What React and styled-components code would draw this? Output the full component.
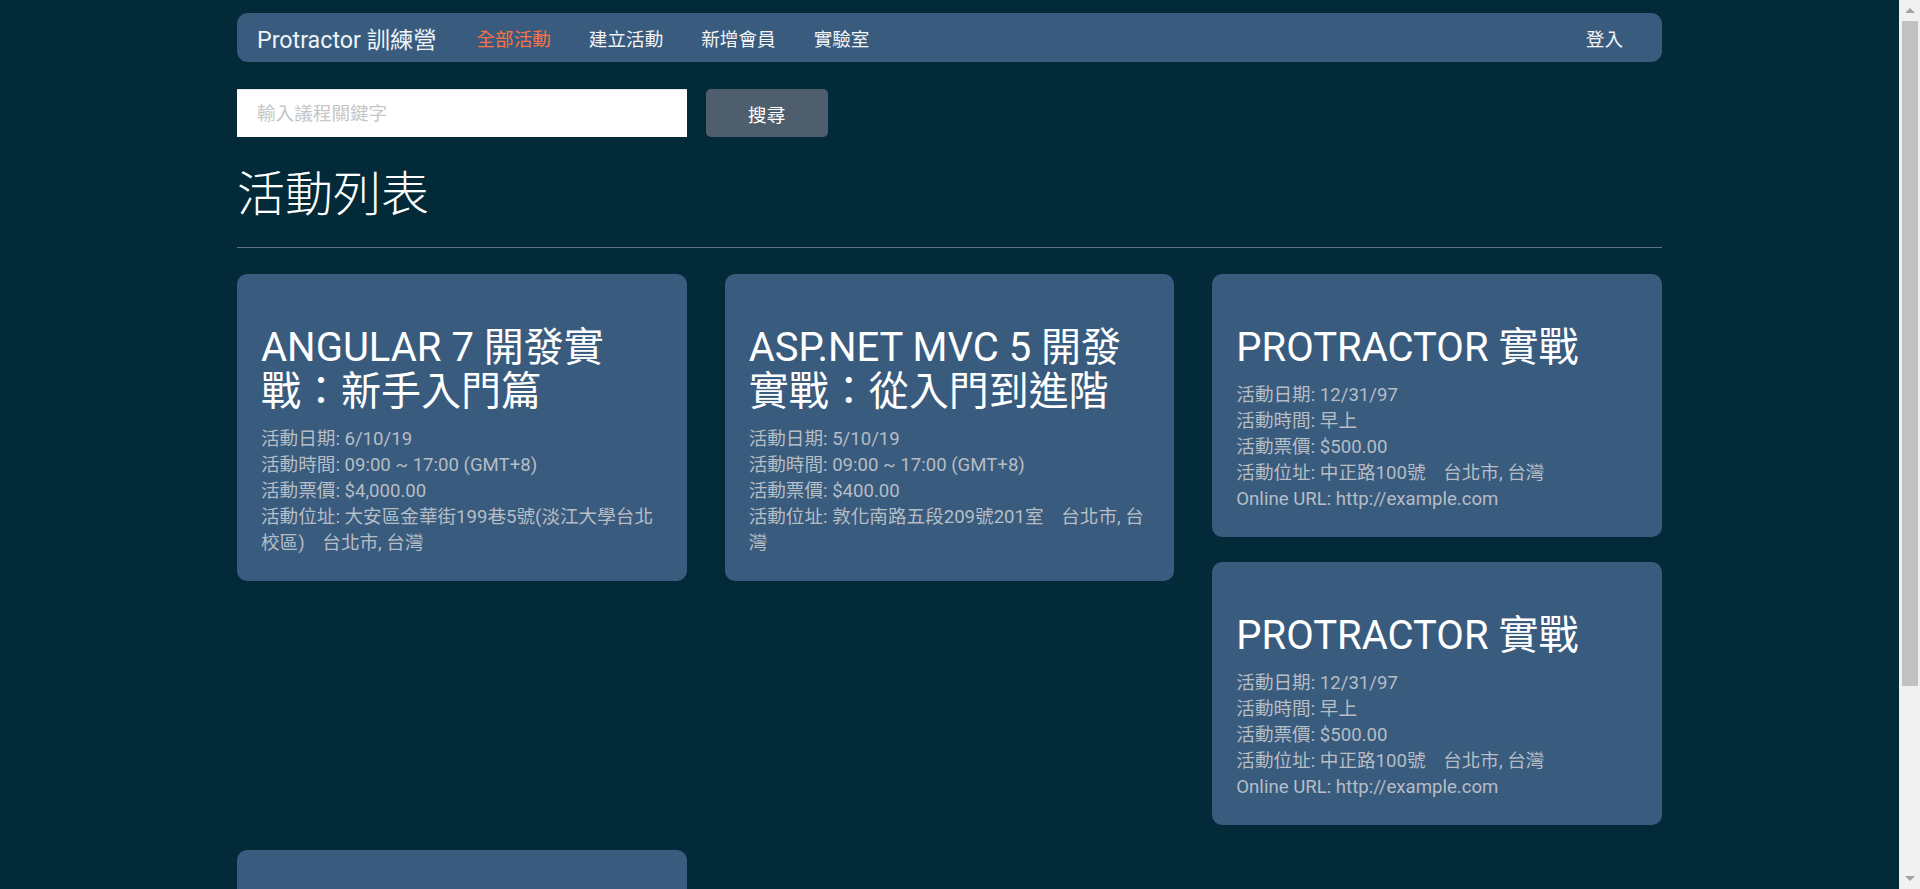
import React from 'react';
import styled, { createGlobalStyle } from 'styled-components';

const GlobalStyle = createGlobalStyle`
  html, body {
    margin: 0;
    padding: 0;
    height: 100%;
    overflow: hidden;
    background: #022a39;
  }
  body {
    font-family: Roboto, "Noto Sans CJK TC", sans-serif;
    font-size: 18.6px;
    color: #ffffff;
  }
  * { box-sizing: border-box; }
`;

const Screen = styled.div`
  display: flex;
  height: 100vh;
`;

const Main = styled.main`
  flex: 1;
  min-width: 0;
  overflow-y: auto;
  background: #022a39;
`;

const ScrollTrack = styled.div`
  flex: 0 0 21px;
  display: flex;
  flex-direction: column;
  background: #f1f1f1;
`;

const ScrollArrow = styled.div`
  flex: 0 0 21px;
  display: flex;
  align-items: center;
  justify-content: center;
  padding-left: 1px;

  &::before {
    content: '';
    width: 0;
    height: 0;
    border-left: 5px solid transparent;
    border-right: 5px solid transparent;
    ${(p) =>
      p.$down
        ? 'border-top: 5px solid #a3a3a3;'
        : 'border-bottom: 5px solid #a3a3a3;'}
  }
`;

const ScrollThumb = styled.div`
  flex: 0 0 665px;
  margin: 0 2px 0 3px;
  background: #c1c1c1;
`;

const ScrollRest = styled.div`
  flex: 1;
`;

const Page = styled.div`
  width: 1425px;
  margin: 0 auto;
  padding: 13px 0 6px;
`;

const NavBar = styled.nav`
  display: flex;
  align-items: center;
  height: 49px;
  padding: 0 20px;
  background: #395b7e;
  border-radius: 11px;
`;

const Brand = styled.a`
  font-size: 23.25px;
  color: #eef3f6;
  margin-right: 21px;
  white-space: nowrap;
  text-decoration: none;
`;

const NavLink = styled.a`
  padding: 0 19px;
  font-size: 18.6px;
  color: ${(p) => (p.$active ? '#ff7043' : '#f2f4f6')};
  text-decoration: none;
  white-space: nowrap;
`;

const NavSpacer = styled.div`
  flex: 1;
`;

const SearchRow = styled.div`
  display: flex;
  gap: 19px;
  margin-top: 27px;
`;

const SearchInput = styled.input`
  width: calc((100% - 76px) / 3);
  height: 48px;
  border: none;
  border-top: 1px solid #e4e4e4;
  border-radius: 0;
  padding: 0 20px;
  font-family: Roboto, "Noto Sans CJK TC", sans-serif;
  font-size: 18.6px;
  color: #333;
  background: #fff;
  outline: none;
  &::placeholder { color: #c6c6c6; }
`;

const SearchButton = styled.button`
  width: 122px;
  height: 48px;
  border: none;
  border-radius: 5px;
  background: #4e5e6c;
  color: #ffffff;
  font-family: Roboto, "Noto Sans CJK TC", sans-serif;
  font-size: 18.6px;
`;

const Heading = styled.h1`
  font-size: 48px;
  font-weight: 300;
  line-height: 1.2;
  margin: 29px 0 23px;
  color: #ffffff;
`;

const Rule = styled.hr`
  border: none;
  border-top: 1px solid #5f747c;
  margin: 0 0 26px;
`;

const CardWrap = styled.div`
  display: flow-root;
  margin-right: -38px;
`;

const Card = styled.div`
  float: left;
  width: calc(33.333% - 38px);
  margin: 0 38px 25px 0;
  padding: 24px 24px 24px;
  background: #395b7e;
  border-radius: 10px;
`;

const CardTitle = styled.h2`
  font-size: 40px;
  font-weight: 400;
  line-height: 44px;
  margin: 28px 0 12px;
  color: #ffffff;
`;

const Detail = styled.div`
  font-size: 18.6px;
  line-height: 26.2px;
  color: #b6bdc4;
`;

const Gap = styled.span`
  display: inline-block;
  width: 13px;
`;

const events = [
  {
    title: 'ANGULAR 7 開發實戰：新手入門篇',
    date: '6/10/19',
    time: '09:00 ~ 17:00 (GMT+8)',
    price: '$4,000.00',
    address: '大安區金華街199巷5號(淡江大學台北校區)',
    city: '台北市, 台灣',
  },
  {
    title: 'ASP.NET MVC 5 開發實戰：從入門到進階',
    date: '5/10/19',
    time: '09:00 ~ 17:00 (GMT+8)',
    price: '$400.00',
    address: '敦化南路五段209號201室',
    city: '台北市, 台灣',
  },
  {
    title: 'PROTRACTOR 實戰',
    date: '12/31/97',
    time: '早上',
    price: '$500.00',
    address: '中正路100號',
    city: '台北市, 台灣',
    url: 'http://example.com',
  },
  {
    title: 'PROTRACTOR 實戰',
    date: '12/31/97',
    time: '早上',
    price: '$500.00',
    address: '中正路100號',
    city: '台北市, 台灣',
    url: 'http://example.com',
  },
  {
    title: 'PROTRACTOR 實戰',
    date: '12/31/97',
    time: '早上',
    price: '$500.00',
    address: '中正路100號',
    city: '台北市, 台灣',
    url: 'http://example.com',
  },
];

export default function App() {
  return (
    <>
      <GlobalStyle />
      <Screen>
        <Main>
          <Page>
            <NavBar>
              <Brand>Protractor 訓練營</Brand>
              <NavLink $active>全部活動</NavLink>
              <NavLink>建立活動</NavLink>
              <NavLink>新增會員</NavLink>
              <NavLink>實驗室</NavLink>
              <NavSpacer />
              <NavLink>登入</NavLink>
            </NavBar>
            <SearchRow>
              <SearchInput placeholder="輸入議程關鍵字" />
              <SearchButton>搜尋</SearchButton>
            </SearchRow>
            <Heading>活動列表</Heading>
            <Rule />
            <CardWrap>
              {events.map((e, i) => (
                <Card key={i}>
                  <CardTitle>{e.title}</CardTitle>
                  <Detail>活動日期: {e.date}</Detail>
                  <Detail>活動時間: {e.time}</Detail>
                  <Detail>活動票價: {e.price}</Detail>
                  <Detail>
                    活動位址: {e.address}
                    <Gap /> {e.city}
                  </Detail>
                  {e.url && <Detail>Online URL: {e.url}</Detail>}
                </Card>
              ))}
            </CardWrap>
          </Page>
        </Main>
        <ScrollTrack aria-hidden="true">
          <ScrollArrow />
          <ScrollThumb />
          <ScrollRest />
          <ScrollArrow $down />
        </ScrollTrack>
      </Screen>
    </>
  );
}
